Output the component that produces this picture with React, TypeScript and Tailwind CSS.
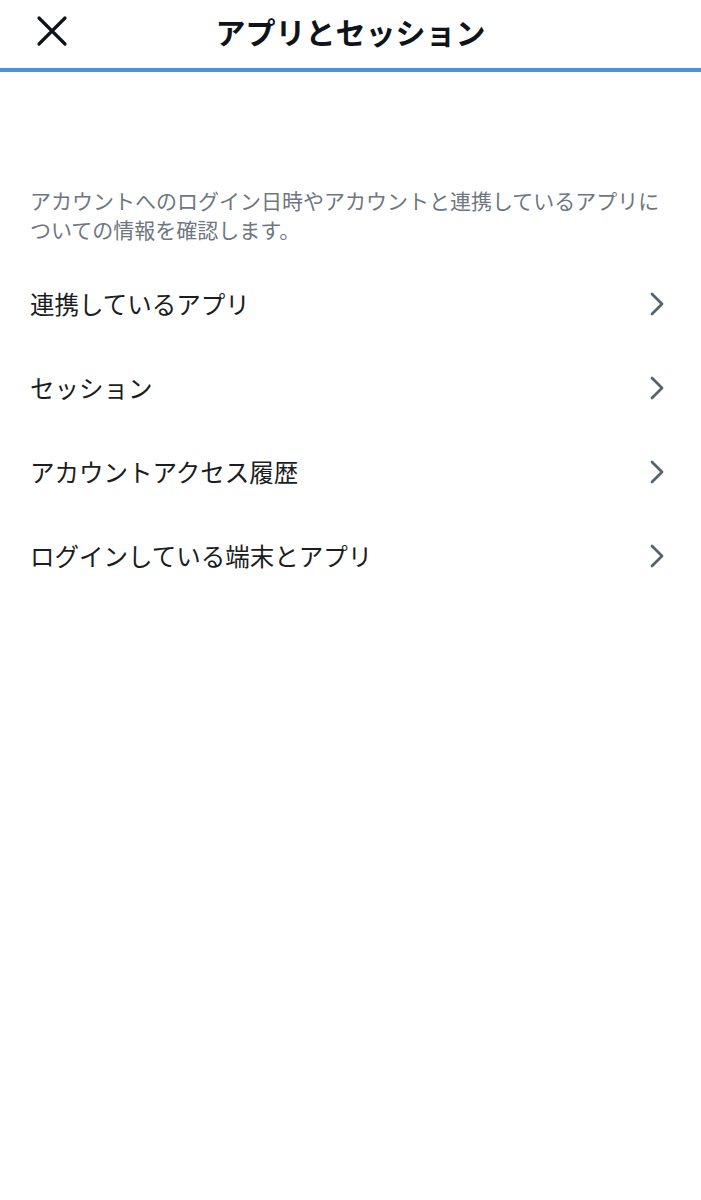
const items = [
  "連携しているアプリ",
  "セッション",
  "アカウントアクセス履歴",
  "ログインしている端末とアプリ",
];

const Chevron = () => (
  <svg width="16" height="26" viewBox="0 0 16 26" fill="none">
    <polyline
      points="3,3 13,13 3,23"
      stroke="#536471"
      strokeWidth="2.8"
      strokeLinecap="round"
      strokeLinejoin="round"
    />
  </svg>
);

export default function App() {
  return (
    <div
      className="w-[701px] h-[1200px] bg-white"
      style={{ fontFamily: '"Noto Sans CJK JP", "Noto Sans", sans-serif' }}
    >
      {/* header */}
      <header className="relative h-[68px] pb-[6px] flex items-center justify-center">
        <button className="absolute left-[36px] top-[15px] w-[32px] h-[32px] flex items-center justify-center">
          <svg width="32" height="32" viewBox="0 0 32 32" fill="none">
            <path d="M3 3 L29 29 M29 3 L3 29" stroke="#0f1419" strokeWidth="3.2" strokeLinecap="round" />
          </svg>
        </button>
        <h1 className="text-[30px] font-bold text-[#0f1419] leading-none">アプリとセッション</h1>
      </header>
      <div className="h-[4px] bg-[#4a90dd]" />

      {/* description */}
      <p className="mt-[114px] px-[30px] text-[21px] leading-[29px] text-[#6e7781]">
        アカウントへのログイン日時やアカウントと連携しているアプリについての情報を確認します。
      </p>

      {/* list */}
      <ul className="mt-[18px]">
        {items.map((label) => (
          <li key={label} className="h-[84px] pl-[30px] pr-[36px] flex items-center justify-between">
            <span className="text-[24.5px] text-[#1a1d21] leading-none">{label}</span>
            <Chevron />
          </li>
        ))}
      </ul>
    </div>
  );
}
